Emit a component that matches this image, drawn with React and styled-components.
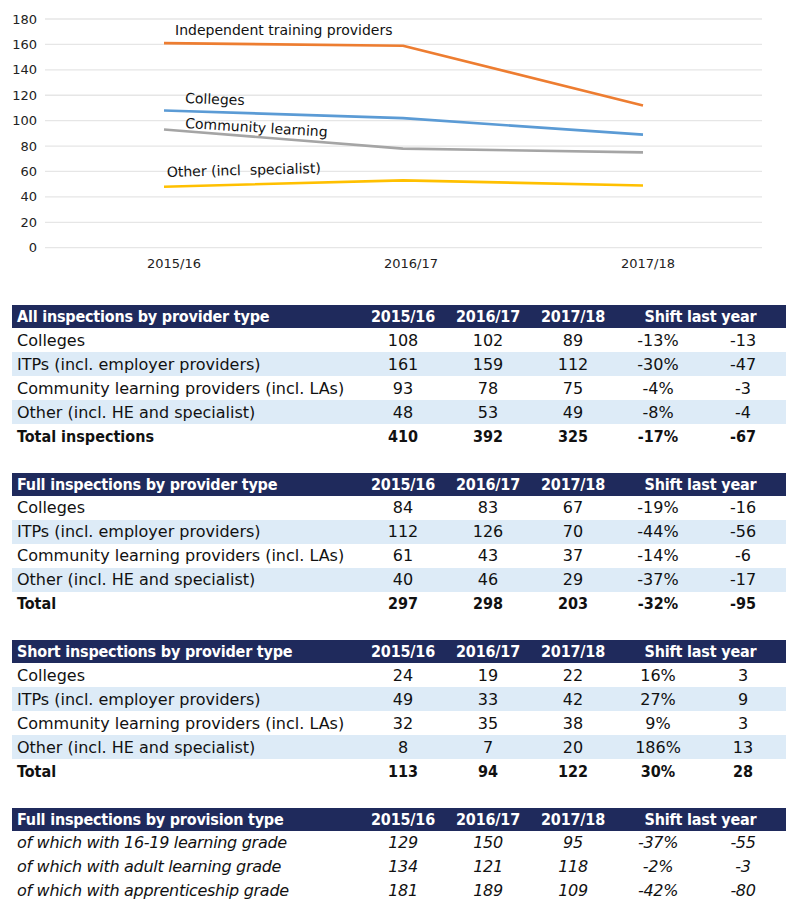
import React from 'react';
import styled, { createGlobalStyle } from 'styled-components';

const GlobalStyle = createGlobalStyle`
  html, body {
    margin: 0;
    padding: 0;
    background: #ffffff;
  }
  body {
    font-family: "DejaVu Sans", "Liberation Sans", sans-serif;
    color: #111111;
  }
`;

const Page = styled.div`
  width: 800px;
  height: 902px;
  overflow: hidden;
  background: #ffffff;
`;

const ChartSvg = styled.svg`
  display: block;
  width: 800px;
  height: 280px;
  font-family: "DejaVu Sans", "Liberation Sans", sans-serif;
`;

const Tables = styled.div`
  margin-top: 25px;
  padding-left: 12px;
  display: flex;
  flex-direction: column;
  gap: 24.5px;
`;

const Table = styled.div`
  width: 773.5px;
`;

const Row = styled.div`
  display: grid;
  grid-template-columns: 348.5px repeat(5, 85px);
  height: ${(p) => (p.$head ? 23 : 24)}px;
  align-items: center;
  background: ${(p) => (p.$head ? '#1f2a5c' : p.$alt ? '#ddebf7' : '#ffffff')};
  color: ${(p) => (p.$head ? '#ffffff' : '#111111')};
  font-size: 16px;
  font-weight: ${(p) => (p.$head || p.$bold ? 700 : 400)};
  font-style: ${(p) => (p.$italic ? 'italic' : 'normal')};
  font-stretch: ${(p) => (p.$head || p.$bold ? 'condensed' : 'normal')};
  letter-spacing: ${(p) => (p.$italic ? '-0.3px' : p.$head ? '-0.2px' : '0')};
  white-space: nowrap;
`;

const Label = styled.div`
  padding-left: 5px;
`;

const Cell = styled.div`
  text-align: center;
  grid-column: ${(p) => (p.$span ? `span ${p.$span}` : 'auto')};
`;

const ChartLabel = styled.text`
  font-size: 14px;
  fill: #111111;
  white-space: pre;
`;

const AxisText = styled.text`
  font-size: 13px;
  fill: #222222;
`;

const years = ['2015/16', '2016/17', '2017/18'];

const series = [
  { name: 'itp', color: '#ed7d31', values: [161, 159, 112] },
  { name: 'colleges', color: '#5b9bd5', values: [108, 102, 89] },
  { name: 'community', color: '#a5a5a5', values: [93, 78, 75] },
  { name: 'other', color: '#ffc000', values: [48, 53, 49] },
];

const pointX = [164, 403, 643];
const yOf = (v) => 247.7 - v * 1.2705;

const Chart = () => (
  <ChartSvg viewBox="0 0 800 280">
    {[0, 20, 40, 60, 80, 100, 120, 140, 160, 180].map((v) => (
      <g key={v}>
        <line x1="45" x2="762" y1={yOf(v)} y2={yOf(v)} stroke="#e6e6e6" strokeWidth="1.3" />
        <AxisText x="37" y={yOf(v) + 4.5} textAnchor="end">
          {v}
        </AxisText>
      </g>
    ))}
    {series.map((s) => (
      <polyline
        key={s.name}
        points={s.values.map((v, i) => `${pointX[i]},${yOf(v)}`).join(' ')}
        fill="none"
        stroke={s.color}
        strokeWidth="2.6"
        strokeLinejoin="round"
      />
    ))}
    {[174, 411, 648].map((x, i) => (
      <AxisText key={x} x={x} y="268" textAnchor="middle">
        {years[i]}
      </AxisText>
    ))}
    <ChartLabel x="175" y="35">Independent training providers</ChartLabel>
    <ChartLabel x="185" y="103" transform="rotate(2 185 103)">Colleges</ChartLabel>
    <ChartLabel x="185" y="128" transform="rotate(3.5 185 128)">Community learning</ChartLabel>
    <ChartLabel x="167" y="177" transform="rotate(-1.5 167 177)">{'Other (incl  specialist)'}</ChartLabel>
  </ChartSvg>
);

const tables = [
  {
    title: 'All inspections by provider type',
    rows: [
      ['Colleges', 108, 102, 89, '-13%', -13],
      ['ITPs (incl. employer providers)', 161, 159, 112, '-30%', -47],
      ['Community learning providers (incl. LAs)', 93, 78, 75, '-4%', -3],
      ['Other (incl. HE and specialist)', 48, 53, 49, '-8%', -4],
    ],
    total: ['Total inspections', 410, 392, 325, '-17%', -67],
  },
  {
    title: 'Full inspections by provider type',
    rows: [
      ['Colleges', 84, 83, 67, '-19%', -16],
      ['ITPs (incl. employer providers)', 112, 126, 70, '-44%', -56],
      ['Community learning providers (incl. LAs)', 61, 43, 37, '-14%', -6],
      ['Other (incl. HE and specialist)', 40, 46, 29, '-37%', -17],
    ],
    total: ['Total', 297, 298, 203, '-32%', -95],
  },
  {
    title: 'Short inspections by provider type',
    rows: [
      ['Colleges', 24, 19, 22, '16%', 3],
      ['ITPs (incl. employer providers)', 49, 33, 42, '27%', 9],
      ['Community learning providers (incl. LAs)', 32, 35, 38, '9%', 3],
      ['Other (incl. HE and specialist)', 8, 7, 20, '186%', 13],
    ],
    total: ['Total', 113, 94, 122, '30%', 28],
  },
  {
    title: 'Full inspections by provision type',
    italic: true,
    rows: [
      ['of which with 16-19 learning grade', 129, 150, 95, '-37%', -55],
      ['of which with adult learning grade', 134, 121, 118, '-2%', -3],
      ['of which with apprenticeship grade', 181, 189, 109, '-42%', -80],
    ],
  },
];

const DataRow = ({ cells, ...rest }) => (
  <Row {...rest}>
    <Label>{cells[0]}</Label>
    {cells.slice(1).map((c, i) => (
      <Cell key={i}>{c}</Cell>
    ))}
  </Row>
);

const InspectionTable = ({ title, rows, total, italic }) => (
  <Table>
    <Row $head>
      <Label>{title}</Label>
      {years.map((y) => (
        <Cell key={y}>{y}</Cell>
      ))}
      <Cell $span={2}>Shift last year</Cell>
    </Row>
    {rows.map((r, i) => (
      <DataRow key={r[0]} cells={r} $alt={!italic && i % 2 === 1} $italic={italic} />
    ))}
    {total && <DataRow cells={total} $bold />}
  </Table>
);

export default function App() {
  return (
    <Page>
      <GlobalStyle />
      <Chart />
      <Tables>
        {tables.map((t) => (
          <InspectionTable key={t.title} {...t} />
        ))}
      </Tables>
    </Page>
  );
}
